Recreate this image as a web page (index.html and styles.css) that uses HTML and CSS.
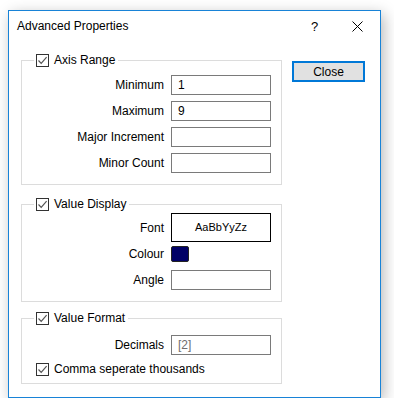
FILE: index.html
```html
<!DOCTYPE html>
<html lang="en">
<head>
  <meta charset="UTF-8" />
  <title>Advanced Properties</title>
  <link rel="stylesheet" href="styles.css">
</head>
<body>
  <div class="dialog">
    <div class="titlebar">
      <span class="title">Advanced Properties</span>
      <span class="help">?</span>
      <svg class="close-x" width="11" height="11" viewBox="0 0 11 11">
        <path d="M0.5 0.5 L10.5 10.5 M10.5 0.5 L0.5 10.5" stroke="#000" stroke-width="1" fill="none"/>
      </svg>
    </div>

    <div class="body">
      <div class="groups">
        <fieldset class="group g-axis">
          <legend><span class="check"></span>Axis Range</legend>
          <div class="rows">
            <label>Minimum</label><div class="field">1</div>
            <label>Maximum</label><div class="field">9</div>
            <label>Major Increment</label><div class="field"></div>
            <label>Minor Count</label><div class="field"></div>
          </div>
        </fieldset>

        <fieldset class="group g-value">
          <legend><span class="check"></span>Value Display</legend>
          <div class="rows">
            <label>Font</label><div class="field font-box">AaBbYyZz</div>
            <label class="top">Colour</label><div class="swatch-cell"><span class="swatch"></span></div>
            <label>Angle</label><div class="field"></div>
          </div>
        </fieldset>

        <fieldset class="group g-format">
          <legend><span class="check"></span>Value Format</legend>
          <div class="rows">
            <label>Decimals</label><div class="field muted">[2]</div>
          </div>
          <div class="check-row"><span class="check"></span>Comma seperate thousands</div>
        </fieldset>
      </div>

      <div class="side">
        <button class="btn">Close</button>
      </div>
    </div>
  </div>
</body>
</html>
```

FILE: styles.css
```css
body {
  margin: 0;
  background: #fff;
  font-family: "Liberation Sans", Arial, sans-serif;
  font-size: 12px;
  color: #000;
}

.dialog {
  margin: 10px 0 0 8px;
  width: 371px;
  height: 386px;
  border: 1px solid #1883d7;
  background: #fff;
  box-shadow: 3px 4px 14px rgba(0, 0, 0, 0.28);
}

.titlebar {
  display: flex;
  align-items: center;
  height: 30px;
  padding-left: 8px;
}

.title {
  flex: 1;
}

.help {
  width: 10px;
  margin-right: 31px;
  font-size: 13px;
}

.close-x {
  margin-right: 17px;
}

.body {
  display: flex;
  padding: 11px 0 0 12px;
}

.groups {
  width: 261px;
}

.group {
  margin: 0;
  padding: 0 10px 0 0;
  border: 1px solid #dcdcdc;
}

.group legend {
  display: flex;
  align-items: center;
  height: 16px;
  margin-left: 12px;
  padding: 0 3px 0 2px;
  line-height: 16px;
}

.check {
  display: inline-block;
  width: 13px;
  height: 13px;
  box-sizing: border-box;
  border: 1px solid #333;
  margin-right: 5px;
  background: #fff url("data:image/svg+xml;utf8,<svg xmlns='http://www.w3.org/2000/svg' width='11' height='11'><path d='M1.5 5.5 L4.2 8.3 L9.6 2.2' stroke='%23555' stroke-width='1.2' fill='none'/></svg>") no-repeat center;
}

.rows {
  display: grid;
  grid-template-columns: 1fr 100px;
  column-gap: 7px;
  row-gap: 6px;
  align-items: center;
}

.rows label {
  text-align: right;
  line-height: 16px;
}

.rows label.top {
  align-self: start;
}

.field {
  box-sizing: border-box;
  height: 20px;
  border: 1px solid #7a7a7a;
  padding-left: 6px;
  line-height: 18px;
}

.muted {
  color: #6d6d6d;
}

.font-box {
  height: 29px;
  border-color: #000;
  padding: 0;
  text-align: center;
  line-height: 27px;
  font-size: 11px;
}

.swatch-cell {
  height: 20px;
}

.swatch {
  display: block;
  width: 18px;
  height: 16px;
  box-sizing: border-box;
  background: #000066;
  border: 1px solid #222;
  border-radius: 2px;
}

.g-axis .rows {
  padding: 7px 0 11px;
}

.g-value {
  margin-top: 11px;
}

.g-value .rows {
  padding: 1px 0 11px;
  row-gap: 4px;
}

.g-format {
  margin-top: 8px;
}

.g-format .rows {
  padding: 9px 0 0;
}

.check-row {
  display: flex;
  align-items: center;
  padding: 8px 0 7px 14px;
  line-height: 13px;
}

.side {
  padding: 9px 0 0 10px;
}

.btn {
  width: 73px;
  height: 21px;
  border: 2px solid #0078d7;
  background: #e1e1e1;
  font-family: inherit;
  font-size: 12px;
  padding: 0;
}
```
